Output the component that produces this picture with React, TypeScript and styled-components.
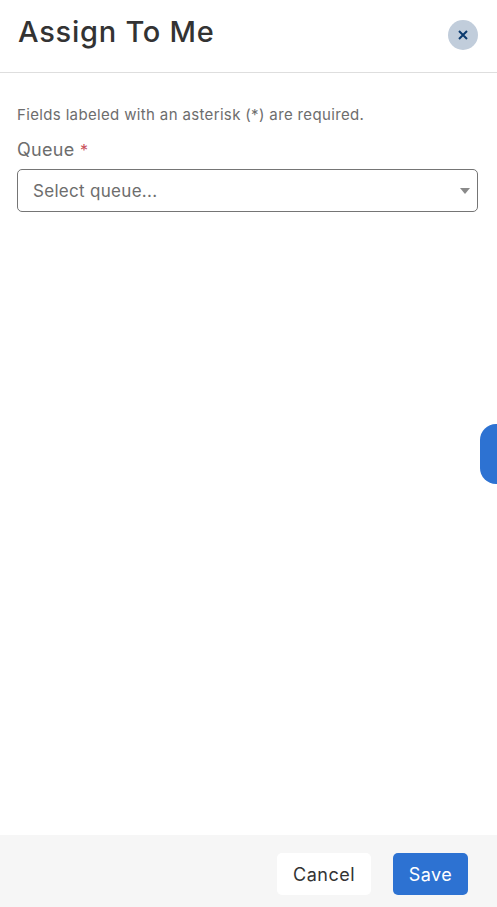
import * as React from 'react';
import styled, { createGlobalStyle } from 'styled-components';

const Global = createGlobalStyle`
  html, body {
    margin: 0;
    padding: 0;
    height: 100%;
    background: #fff;
  }
  #root {
    height: 100%;
  }
  * {
    box-sizing: border-box;
  }
`;

const Root = styled.div`
  position: relative;
  display: flex;
  flex-direction: column;
  height: 907px;
  overflow: hidden;
  font-family: Inter, 'Noto Sans', sans-serif;
  color: #333;
`;

const Header = styled.header`
  display: flex;
  justify-content: space-between;
  height: 73px;
  padding: 15px 19px 0 18px;
  border-bottom: 1px solid #dedede;
`;

const Title = styled.h1`
  margin: 0;
  font-size: 29px;
  line-height: 34px;
  font-weight: 500;
  letter-spacing: 0.75px;
  color: #333;
`;

const CloseButton = styled.button`
  display: flex;
  align-items: center;
  justify-content: center;
  width: 30px;
  height: 30px;
  margin-top: 5px;
  padding: 0;
  border: 0;
  border-radius: 50%;
  background: #c1cddb;
  color: #0b3a6e;
`;

const Body = styled.main`
  flex: 1;
  padding: 32px 19px 0 17px;
`;

const Hint = styled.p`
  margin: 0 0 15px;
  font-size: 15px;
  line-height: 20px;
  letter-spacing: 0.35px;
  color: #6d6d6d;
`;

const Label = styled.label`
  display: block;
  margin-bottom: 9px;
  font-size: 18px;
  line-height: 20px;
  letter-spacing: 0.3px;
  color: #6d6d6d;
`;

const Required = styled.span`
  font-size: 16px;
  color: #c8505a;
`;

const Select = styled.div`
  display: flex;
  align-items: center;
  justify-content: space-between;
  height: 43px;
  padding: 0 7px 0 15px;
  border: 1px solid #757575;
  border-radius: 5px;
  font-size: 17px;
  letter-spacing: 0.3px;
  color: #6d6d6d;
`;

const Caret = styled.span`
  width: 0;
  height: 0;
  border-left: 5px solid transparent;
  border-right: 5px solid transparent;
  border-top: 6px solid #8a8a8a;
`;

const Footer = styled.footer`
  display: flex;
  justify-content: flex-end;
  gap: 22px;
  height: 72px;
  padding: 18px 29px 0 0;
  background: #f6f6f6;
`;

const Button = styled.button<{ $primary?: boolean }>`
  height: 42px;
  width: ${(p) => (p.$primary ? '75px' : '94px')};
  padding: 0;
  border: 0;
  border-radius: 5px;
  font-family: inherit;
  font-size: 18px;
  letter-spacing: 0.5px;
  background: ${(p) => (p.$primary ? '#2d72d2' : '#fff')};
  color: ${(p) => (p.$primary ? '#fff' : '#333')};
`;

const SideTab = styled.div`
  position: absolute;
  top: 424px;
  right: 0;
  width: 17px;
  height: 60px;
  border-radius: 16px 0 0 16px;
  background: #2d72d2;
`;

export default function App() {
  return (
    <Root>
      <Global />
      <Header>
        <Title>Assign To Me</Title>
        <CloseButton aria-label="Close">
          <svg width="10" height="10" viewBox="0 0 10 10" fill="none">
            <path d="M1 1l8 8M9 1l-8 8" stroke="currentColor" strokeWidth="2" />
          </svg>
        </CloseButton>
      </Header>
      <Body>
        <Hint>Fields labeled with an asterisk (*) are required.</Hint>
        <Label>
          Queue <Required>*</Required>
        </Label>
        <Select>
          Select queue...
          <Caret />
        </Select>
      </Body>
      <Footer>
        <Button>Cancel</Button>
        <Button $primary>Save</Button>
      </Footer>
      <SideTab />
    </Root>
  );
}
